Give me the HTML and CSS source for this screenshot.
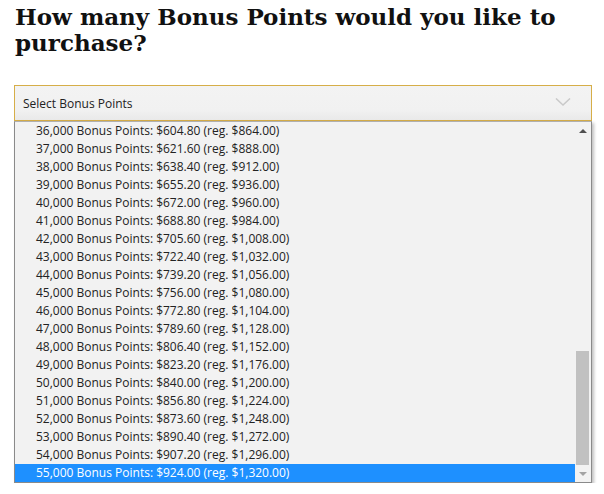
FILE: index.html
```html
<!DOCTYPE html>
<html lang="en">
<head>
    <meta charset="UTF-8">
    <meta name="viewport" content="width=device-width, initial-scale=1.0">
    <title>Bonus Points</title>
    <link rel="stylesheet" href="styles.css">
</head>
<body>
    <div id="page">
        <h1>How many Bonus Points would you like to purchase?</h1>
        <div class="picker">
            <div class="select">
                <span>Select Bonus Points</span>
                <svg class="chevron" width="16" height="8" viewBox="0 0 16 8">
                    <path d="M1 0.5 L8 7 L15 0.5" fill="none" stroke="#c9c9c9" stroke-width="1.5"/>
                </svg>
            </div>
            <div class="list">
                <ul class="options">
                    <li>36,000 Bonus Points: $604.80 (reg. $864.00)</li>
                    <li>37,000 Bonus Points: $621.60 (reg. $888.00)</li>
                    <li>38,000 Bonus Points: $638.40 (reg. $912.00)</li>
                    <li>39,000 Bonus Points: $655.20 (reg. $936.00)</li>
                    <li>40,000 Bonus Points: $672.00 (reg. $960.00)</li>
                    <li>41,000 Bonus Points: $688.80 (reg. $984.00)</li>
                    <li>42,000 Bonus Points: $705.60 (reg. $1,008.00)</li>
                    <li>43,000 Bonus Points: $722.40 (reg. $1,032.00)</li>
                    <li>44,000 Bonus Points: $739.20 (reg. $1,056.00)</li>
                    <li>45,000 Bonus Points: $756.00 (reg. $1,080.00)</li>
                    <li>46,000 Bonus Points: $772.80 (reg. $1,104.00)</li>
                    <li>47,000 Bonus Points: $789.60 (reg. $1,128.00)</li>
                    <li>48,000 Bonus Points: $806.40 (reg. $1,152.00)</li>
                    <li>49,000 Bonus Points: $823.20 (reg. $1,176.00)</li>
                    <li>50,000 Bonus Points: $840.00 (reg. $1,200.00)</li>
                    <li>51,000 Bonus Points: $856.80 (reg. $1,224.00)</li>
                    <li>52,000 Bonus Points: $873.60 (reg. $1,248.00)</li>
                    <li>53,000 Bonus Points: $890.40 (reg. $1,272.00)</li>
                    <li>54,000 Bonus Points: $907.20 (reg. $1,296.00)</li>
                    <li class="selected">55,000 Bonus Points: $924.00 (reg. $1,320.00)</li>
                </ul>
                <div class="scrollbar">
                    <div class="arrow up"></div>
                    <div class="track"><div class="thumb"></div></div>
                    <div class="arrow down"></div>
                </div>
            </div>
        </div>
    </div>
</body>
</html>
```

FILE: styles.css
```css
*{
    margin: 0;
    padding: 0;
    box-sizing: border-box;
}
body{
    background: #fff;
}
#page{
    padding: 4px 12px 0 14px;
}
h1{
    font-family: "DejaVu Serif", serif;
    font-weight: bold;
    font-size: 23px;
    line-height: 26px;
    color: #111;
    padding-left: 1px;
    width: 570px;
}
.picker{
    margin-top: 29px;
    width: 578px;
    font-family: "Open Sans", sans-serif;
    font-size: 12px;
    color: #222;
}
.select{
    height: 36px;
    border: 1px solid #d6ae48;
    background: linear-gradient(#f3f3f3, #f1f1f1 70%, #e9e9e9);
    display: flex;
    align-items: center;
    justify-content: space-between;
    padding: 0 20px 0 8px;
}
.chevron{
    margin-top: -2px;
}
.list{
    display: flex;
    border: 1px solid #8a8a8a;
    border-top-color: #b0b0b0;
    background: #f2f2f2;
    box-shadow: 2px 2px 3px rgba(0, 0, 0, 0.25);
}
.options{
    list-style: none;
    flex: 1;
}
.options li{
    height: 18px;
    line-height: 18px;
    padding-left: 21px;
    white-space: nowrap;
}
.options li.selected{
    background: #1e90ff;
    color: #fff;
}
.scrollbar{
    width: 16px;
    display: flex;
    flex-direction: column;
    padding: 0 2px 0 1px;
}
.track{
    flex: 1;
    display: flex;
    flex-direction: column;
    justify-content: flex-end;
}
.thumb{
    height: 114px;
    background: #c1c1c1;
}
.arrow{
    height: 17px;
    display: flex;
    align-items: center;
    justify-content: center;
}
.arrow.up::after{
    content: "";
    border-left: 4px solid transparent;
    border-right: 4px solid transparent;
    border-bottom: 4px solid #505050;
}
.arrow.down::after{
    content: "";
    border-left: 4px solid transparent;
    border-right: 4px solid transparent;
    border-top: 4px solid #a3a3a3;
}
```
